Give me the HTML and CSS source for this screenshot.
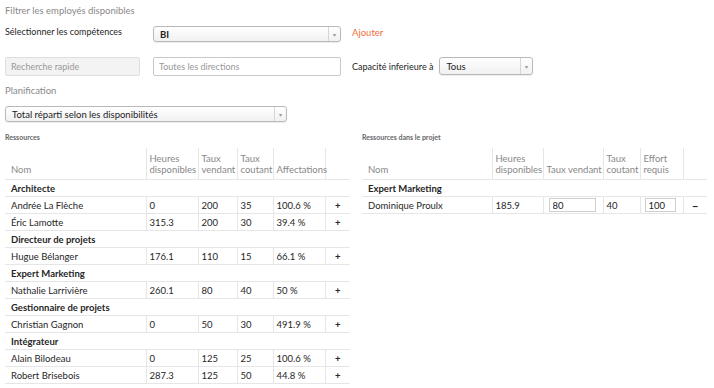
FILE: index.html
```html
<!DOCTYPE html>
<html lang="fr">
	<head>
		<meta charset="UTF-8" />
		<title>Planification des ressources</title>
		<link rel="stylesheet" href="styles.css">
	</head>
	<body>
		<div class="filters">
			<div class="title">Filtrer les employés disponibles</div>
			<div class="row row-skills">
				<label class="label label-skills">Sélectionner les compétences</label>
				<div class="select select-skills"><span>BI</span><i class="arrow">▾</i></div>
				<a class="add" href="#">Ajouter</a>
			</div>
			<div class="row row-search">
				<input class="field field-quick" type="text" placeholder="Recherche rapide">
				<input class="field field-dir" type="text" placeholder="Toutes les directions">
				<label class="label label-cap">Capacité inferieure à</label>
				<div class="select select-cap"><span>Tous</span><i class="arrow">▾</i></div>
			</div>
			<div class="title title-plan">Planification</div>
			<div class="select select-plan"><span>Total réparti selon les disponibilités</span><i class="arrow">▾</i></div>
		</div>

		<div class="tables">
			<div class="panel panel-left">
				<div class="panel-title">Ressources</div>
				<table class="grid">
					<colgroup>
						<col class="c-name">
						<col class="c-hours">
						<col class="c-sell">
						<col class="c-cost">
						<col class="c-aff">
						<col class="c-act">
					</colgroup>
					<thead>
						<tr>
							<th>Nom</th>
							<th>Heures disponibles</th>
							<th>Taux vendant</th>
							<th>Taux coutant</th>
							<th>Affectations</th>
							<th></th>
						</tr>
					</thead>
					<tbody>
						<tr class="group"><td colspan="6">Architecte</td></tr>
						<tr><td>Andrée La Flèche</td><td>0</td><td>200</td><td>35</td><td>100.6 %</td><td class="act">+</td></tr>
						<tr><td>Éric Lamotte</td><td>315.3</td><td>200</td><td>30</td><td>39.4 %</td><td class="act">+</td></tr>
						<tr class="group"><td colspan="6">Directeur de projets</td></tr>
						<tr><td>Hugue Bélanger</td><td>176.1</td><td>110</td><td>15</td><td>66.1 %</td><td class="act">+</td></tr>
						<tr class="group"><td colspan="6">Expert Marketing</td></tr>
						<tr><td>Nathalie Larrivière</td><td>260.1</td><td>80</td><td>40</td><td>50 %</td><td class="act">+</td></tr>
						<tr class="group"><td colspan="6">Gestionnaire de projets</td></tr>
						<tr><td>Christian Gagnon</td><td>0</td><td>50</td><td>30</td><td>491.9 %</td><td class="act">+</td></tr>
						<tr class="group"><td colspan="6">Intégrateur</td></tr>
						<tr><td>Alain Bilodeau</td><td>0</td><td>125</td><td>25</td><td>100.6 %</td><td class="act">+</td></tr>
						<tr><td>Robert Brisebois</td><td>287.3</td><td>125</td><td>50</td><td>44.8 %</td><td class="act">+</td></tr>
					</tbody>
				</table>
			</div>

			<div class="panel panel-right">
				<div class="panel-title">Ressources dans le projet</div>
				<table class="grid">
					<colgroup>
						<col class="p-name">
						<col class="p-hours">
						<col class="p-sell">
						<col class="p-cost">
						<col class="p-eff">
						<col class="p-act">
					</colgroup>
					<thead>
						<tr>
							<th>Nom</th>
							<th>Heures disponibles</th>
							<th class="nowrap">Taux vendant</th>
							<th>Taux coutant</th>
							<th>Effort requis</th>
							<th></th>
						</tr>
					</thead>
					<tbody>
						<tr class="group"><td colspan="6">Expert Marketing</td></tr>
						<tr>
							<td>Dominique Proulx</td>
							<td>185.9</td>
							<td class="has-input"><input class="cell-input in-sell" type="text" value="80"></td>
							<td>40</td>
							<td class="has-input"><input class="cell-input in-eff" type="text" value="100"></td>
							<td class="act minus">−</td>
						</tr>
					</tbody>
				</table>
			</div>
		</div>
	</body>
</html>
```

FILE: styles.css
```css
body {
	margin: 0;
	padding: 0 5px;
	font-family: "Lato", "Liberation Sans", sans-serif;
	font-size: 9.5px;
	color: #262626;
	background: #fff;
}

.filters {
	padding-top: 5px;
}

.title {
	color: #888;
	font-size: 9.5px;
	height: 12px;
	line-height: 12px;
}

.row {
	display: flex;
	align-items: center;
}

.row-skills {
	margin-top: 9px;
	height: 16px;
}

.row-search {
	margin-top: 15px;
	height: 19px;
}

.label {
	font-size: 9px;
	color: #1e1e1e;
}

.label-skills {
	width: 148px;
	align-self: flex-start;
}

.label-cap {
	margin-left: 11px;
	margin-right: 6px;
}

.add {
	margin-left: 11px;
	color: #f26c3b;
	text-decoration: none;
	font-size: 9.5px;
	align-self: flex-start;
	margin-top: 1px;
}

.select {
	display: flex;
	align-items: center;
	box-sizing: border-box;
	border: 1px solid #b9b9b9;
	border-radius: 3px;
	background: linear-gradient(#ffffff, #f1f1f1);
	box-shadow: 0 1px 1px rgba(0, 0, 0, 0.08);
	font-size: 9.5px;
	color: #222;
}

.select span {
	flex: 1;
	padding-left: 6px;
	white-space: nowrap;
}

.select .arrow {
	font-style: normal;
	width: 11px;
	height: 100%;
	border-left: 1px solid #d6d6d6;
	color: #999;
	font-size: 6px;
	display: flex;
	align-items: center;
	justify-content: center;
}

.select-skills {
	width: 188px;
	height: 16px;
}

.select-skills span {
	font-weight: bold;
}

.select-cap {
	width: 94px;
	height: 18px;
	align-self: flex-start;
}

.select-plan {
	width: 282px;
	height: 16px;
	margin-top: 9px;
}

.title-plan {
	margin-top: 9px;
}

.field {
	box-sizing: border-box;
	height: 19px;
	border: 1px solid #c9c9c9;
	border-radius: 2px;
	padding: 0 5px;
	font-family: inherit;
	font-size: 9px;
	color: #222;
	outline: none;
}

.field::placeholder {
	color: #999;
}

.field-quick {
	width: 135px;
	background: #f3f3f3;
	border-color: #dedede;
	margin-right: 13px;
}

.field-dir {
	width: 188px;
	background: #fff;
}

.tables {
	display: flex;
	margin-top: 9px;
}

.panel-left {
	width: 345px;
}

.panel-right {
	width: 345px;
	margin-left: 12px;
}

.panel-title {
	font-size: 7px;
	font-weight: bold;
	color: #666;
	height: 12px;
	line-height: 12px;
}

.grid {
	border-collapse: collapse;
	width: 345px;
	margin-top: 5px;
	table-layout: fixed;
}

.grid th {
	font-weight: normal;
	color: #888;
	text-align: left;
	vertical-align: bottom;
	padding: 3px 3px 4px 3px;
	line-height: 11px;
	height: 24px;
	border-left: 1px solid #e6e6e6;
	border-bottom: 1px solid #e6e6e6;
}

.grid th:first-child {
	border-left: none;
	padding-left: 6px;
}

.grid th.nowrap {
	white-space: nowrap;
}

.grid td {
	height: 16px;
	padding: 0 3px;
	border-top: 1px solid #e6e6e6;
	border-bottom: 1px solid #e6e6e6;
	border-left: 1px solid #e6e6e6;
	white-space: nowrap;
}

.grid td:first-child {
	border-left: none;
	padding-left: 6px;
}

.grid tr.group td {
	font-weight: bold;
}

.grid td.act {
	text-align: center;
	font-weight: bold;
}

.grid td.minus {
	font-size: 11px;
}

.c-name { width: 141px; }
.c-hours { width: 52px; }
.c-sell { width: 39px; }
.c-cost { width: 36px; }
.c-aff { width: 52px; }
.c-act { width: 25px; }

.p-name { width: 130px; }
.p-hours { width: 51px; }
.p-sell { width: 60px; }
.p-cost { width: 37px; }
.p-eff { width: 43px; }
.p-act { width: 24px; }

.cell-input {
	box-sizing: border-box;
	height: 14px;
	border: 1px solid #cfcfcf;
	padding: 0 3px;
	font-family: inherit;
	font-size: 9.5px;
	color: #222;
	vertical-align: middle;
}

.in-sell { width: 47px; margin-left: 2px; }
.in-eff { width: 31px; margin-left: 1px; }
```
